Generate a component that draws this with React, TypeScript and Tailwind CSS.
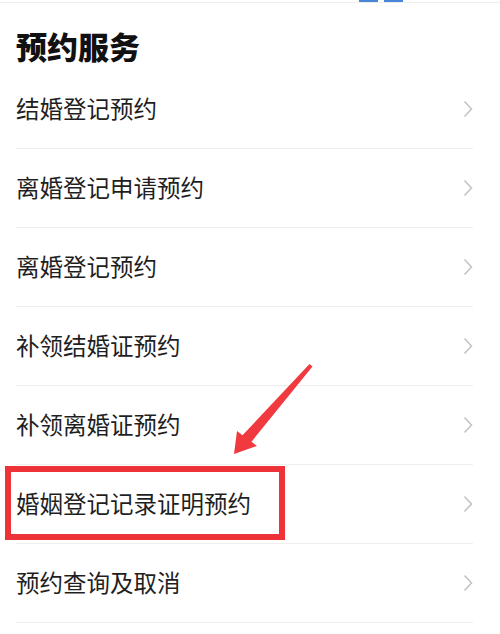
import React from 'react';

const items = [
  '结婚登记预约',
  '离婚登记申请预约',
  '离婚登记预约',
  '补领结婚证预约',
  '补领离婚证预约',
  '婚姻登记记录证明预约',
  '预约查询及取消',
];

const Chevron = () => (
  <svg width="10" height="18" viewBox="0 0 10 18" className="shrink-0">
    <path d="M1.5 1.5 L8.5 9 L1.5 16.5" fill="none" stroke="#c4c4c4" strokeWidth="1.6" />
  </svg>
);

export default function App() {
  return (
    <div
      className="relative w-[500px] h-[634px] overflow-hidden bg-white"
      style={{ fontFamily: '"Noto Sans CJK SC", "Noto Sans", sans-serif' }}
    >
      {/* cropped bits of the screen above */}
      <div className="flex h-[3px] border-b border-[#eeeeee]">
        <div className="ml-[359px] w-[19px] bg-[#4a86d8]" />
        <div className="ml-[6px] w-[19px] bg-[#4a86d8]" />
      </div>

      <div className="pl-4 pr-[27px]">
        <h1 className="h-[67px] pt-[19px] text-[31px] leading-[48px] font-black text-[#111111]">预约服务</h1>
        <ul>
          {items.map((label) => (
            <li key={label} className="flex h-[79px] items-center justify-between border-b border-[#efefef]">
              <span className="text-[23.5px] text-[#1f1f1f] leading-none">{label}</span>
              <Chevron />
            </li>
          ))}
        </ul>
      </div>

      {/* annotation: red box */}
      <div className="absolute left-[5px] top-[466px] w-[280px] h-[74px] border-[6px] border-[#ee3338]" />

      {/* annotation: arrow */}
      <svg className="absolute left-[225px] top-[360px]" width="95" height="100" viewBox="0 0 95 100">
        <polygon
          points="84.5,4 17.5,75.3 12,71 9,94 32,86 26.5,81.7 87.5,6.5"
          fill="#f03a3f"
        />
      </svg>
    </div>
  );
}
